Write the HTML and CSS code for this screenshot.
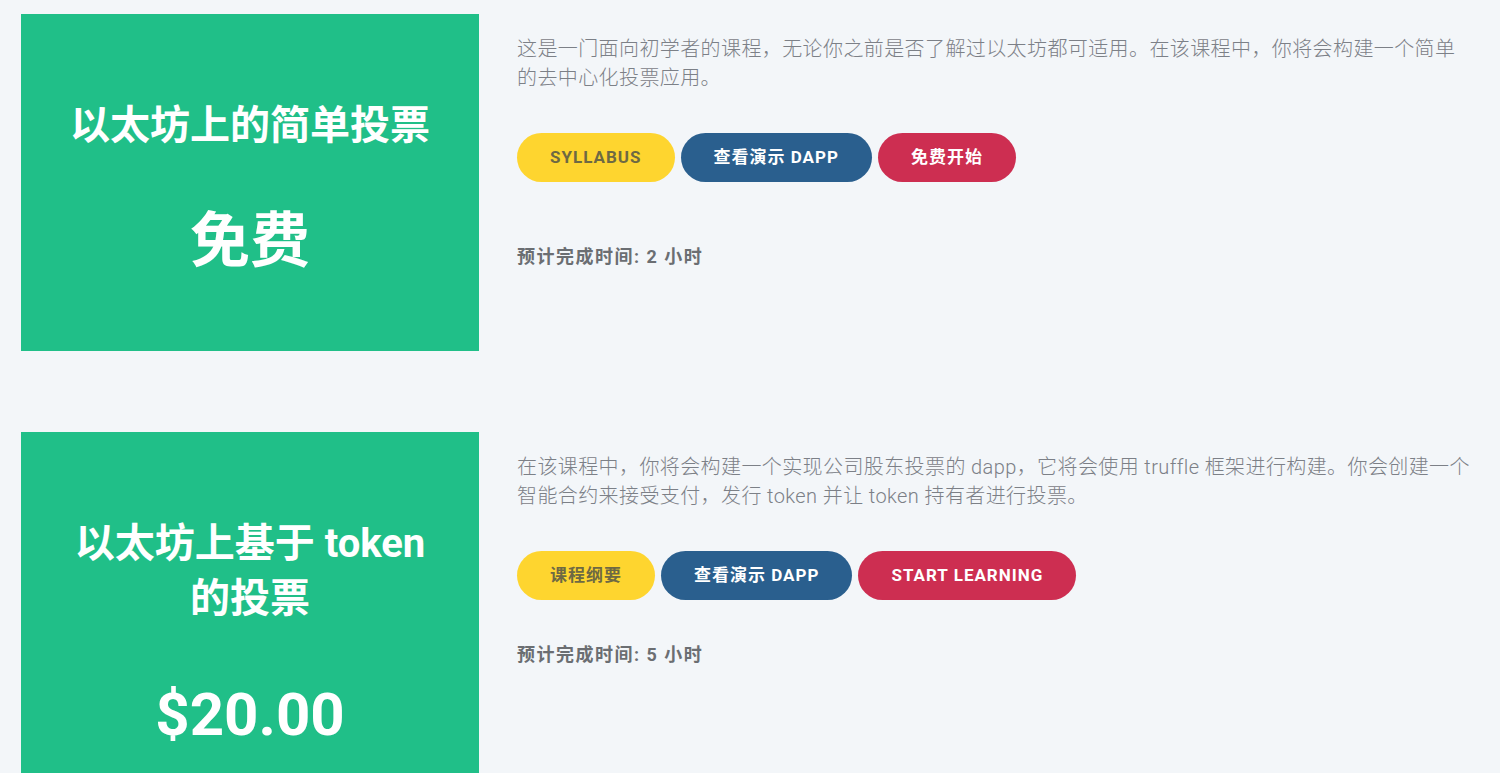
FILE: index.html
```html
<!DOCTYPE html>
<html lang="zh-CN">
<head>
<meta charset="utf-8">
<title>课程</title>
<link rel="stylesheet" href="styles.css">
</head>
<body>
<div class="page">
  <section class="course">
    <div class="cover">
      <h2 class="cover-title">以太坊上的简单投票</h2>
      <div class="cover-price">免费</div>
    </div>
    <div class="info">
      <p class="desc">这是一门面向初学者的课程，无论你之前是否了解过以太坊都可适用。在该课程中，你将会构建一个简单的去中心化投票应用。</p>
      <div class="actions">
        <a class="btn btn-yellow">SYLLABUS</a>
        <a class="btn btn-blue">查看演示 DAPP</a>
        <a class="btn btn-red">免费开始</a>
      </div>
      <p class="meta meta-far">预计完成时间: 2 小时</p>
    </div>
  </section>
  <section class="course">
    <div class="cover">
      <h2 class="cover-title">以太坊上基于 token 的投票</h2>
      <div class="cover-price">$20.00</div>
    </div>
    <div class="info">
      <p class="desc">在该课程中，你将会构建一个实现公司股东投票的 dapp，它将会使用 truffle 框架进行构建。你会创建一个智能合约来接受支付，发行 token 并让 token 持有者进行投票。</p>
      <div class="actions">
        <a class="btn btn-yellow">课程纲要</a>
        <a class="btn btn-blue">查看演示 DAPP</a>
        <a class="btn btn-red">START LEARNING</a>
      </div>
      <p class="meta">预计完成时间: 5 小时</p>
    </div>
  </section>
</div>
</body>
</html>
```
FILE: styles.css
```css
html, body {
  margin: 0;
  padding: 0;
  background: #f3f6f9;
  font-family: Roboto, "Noto Sans CJK SC", sans-serif;
}
.page {
  padding: 14px 21px;
}
.course {
  display: flex;
  gap: 38px;
  margin-bottom: 81px;
}
.cover {
  flex: none;
  width: 458px;
  box-sizing: border-box;
  background: #20bf88;
  color: #fff;
  text-align: center;
  padding: 84px 40px 73px;
}
.cover-title {
  margin: 0;
  font-size: 40px;
  line-height: 55px;
  font-weight: 700;
}
.cover-price {
  margin-top: 53px;
  font-size: 60px;
  line-height: 72px;
  font-weight: 700;
}
.info {
  width: 956px;
  padding-top: 21px;
}
.desc {
  margin: 0;
  font-size: 20px;
  line-height: 29px;
  font-weight: 300;
  letter-spacing: 0.4px;
  color: #7c8087;
}
.actions {
  display: flex;
  gap: 6px;
  margin-top: 40px;
}
.btn {
  display: block;
  height: 49px;
  line-height: 49px;
  padding: 0 33px;
  border-radius: 25px;
  font-size: 17px;
  font-weight: 700;
  letter-spacing: 1px;
  color: #fff;
  white-space: nowrap;
}
.btn-yellow {
  background: #fed52f;
  color: #6e6943;
}
.btn-blue {
  background: #2a5f8e;
}
.btn-red {
  background: #cd2e51;
}
.meta {
  margin: 40px 0 0;
  font-size: 18px;
  line-height: 29px;
  font-weight: 700;
  letter-spacing: 1.5px;
  color: #6b6e72;
}
.meta-far {
  margin-top: 60px;
}
```
